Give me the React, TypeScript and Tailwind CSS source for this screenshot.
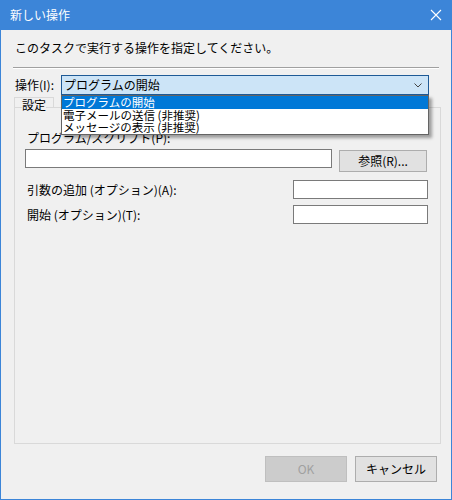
import { useState } from "react";

const font = { fontFamily: '"Noto Sans CJK JP", "Liberation Sans", sans-serif' };

export default function App() {
    const [open] = useState(true);
    const options = ["プログラムの開始", "電子メールの送信 (非推奨)", "メッセージの表示 (非推奨)"];

    return (
        <div
            className="w-[452px] h-[500px] flex flex-col bg-[#3c85d8] px-px pb-px text-[12px] text-black"
            style={font}
        >
            {/* タイトルバー */}
            <div className="h-[30px] flex items-center justify-between pl-[9px] pr-[8px] text-white">
                <span className="leading-[14px]">新しい操作</span>
                <svg width="12" height="12" viewBox="0 0 12 12" className="mr-[1px]">
                    <path d="M1 1 L11 11 M11 1 L1 11" stroke="#ffffff" strokeWidth="1.1" />
                </svg>
            </div>

            <div className="flex-1 bg-[#f0f0f0] flex flex-col">
                <p className="mt-[10px] ml-[14px] leading-[16px]">このタスクで実行する操作を指定してください。</p>
                <div className="mt-[11px] mx-[12px] border-t border-[#a0a0a0] border-b border-b-white" />

                {/* 操作 */}
                <div className="mt-[6px] flex items-center h-[20px]">
                    <span className="ml-[14px] w-[46px] leading-[14px]">操作(I):</span>
                    <div className="relative w-[368px] h-[20px]">
                        <div className="h-full border border-[#1e5a96] bg-[#cce4f7] flex items-center justify-between pl-[2px] pr-[6px]">
                            <span className="leading-[14px]">プログラムの開始</span>
                            <svg width="8" height="5" viewBox="0 0 8 5">
                                <path d="M0.5 0.5 L4 4 L7.5 0.5" fill="none" stroke="#444" strokeWidth="1" />
                            </svg>
                        </div>
                        {open && (
                            <div className="absolute left-0 top-full w-full z-10 bg-white border border-[#646464] shadow-[3px_3px_3px_rgba(0,0,0,0.35)]">
                                {options.map((o, i) => (
                                    <div
                                        key={o}
                                        className={
                                            i === 0
                                                ? "h-[12.5px] leading-[12.5px] text-[11.5px] pl-[1px] bg-[#0078d7] text-white"
                                                : "h-[12.5px] leading-[12.5px] text-[11.5px] pl-[1px]"
                                        }
                                    >
                                        {o}
                                    </div>
                                ))}
                            </div>
                        )}
                    </div>
                </div>

                {/* タブ */}
                <div className="relative flex-1 flex flex-col ml-[13px] mr-[10px] mt-[2px]">
                    <div className="h-[10px] w-[40px] border border-b-0 border-[#d9d9d9] flex items-end justify-center">
                        <span className="leading-[14px] translate-y-[5px] bg-[#f0f0f0]">設定</span>
                    </div>
                    <div className="flex-1 border border-[#d9d9d9] flex flex-col pl-[10px]">
                        <span className="mt-[23px] ml-[2px] leading-[14px]">プログラム/スクリプト(P):</span>
                        <div className="mt-[4px] flex items-start">
                            <div className="w-[307px] h-[19px] bg-white border border-[#7a7a7a]" />
                            <button className="ml-[7px] mt-[1px] w-[88px] h-[22px] bg-[#e1e1e1] border border-[#adadad] leading-[14px]">
                                参照(R)...
                            </button>
                        </div>
                        <div className="mt-[8px] flex items-center">
                            <span className="ml-[2px] w-[266px] leading-[14px]">引数の追加 (オプション)(A):</span>
                            <div className="w-[135px] h-[19px] bg-white border border-[#7a7a7a]" />
                        </div>
                        <div className="mt-[6px] flex items-center">
                            <span className="ml-[2px] w-[266px] leading-[14px]">開始 (オプション)(T):</span>
                            <div className="w-[135px] h-[19px] bg-white border border-[#7a7a7a]" />
                        </div>
                    </div>
                </div>

                {/* ボタン */}
                <div className="pt-[12px] pb-[17px] pr-[14px] flex justify-end gap-[8px]">
                    <button className="w-[82px] h-[26px] bg-[#cccccc] border border-[#bfbfbf] text-[#a0a0a0] leading-[14px]">
                        OK
                    </button>
                    <button className="w-[82px] h-[26px] bg-[#e1e1e1] border border-[#adadad] leading-[14px]">
                        キャンセル
                    </button>
                </div>
            </div>
        </div>
    );
}
